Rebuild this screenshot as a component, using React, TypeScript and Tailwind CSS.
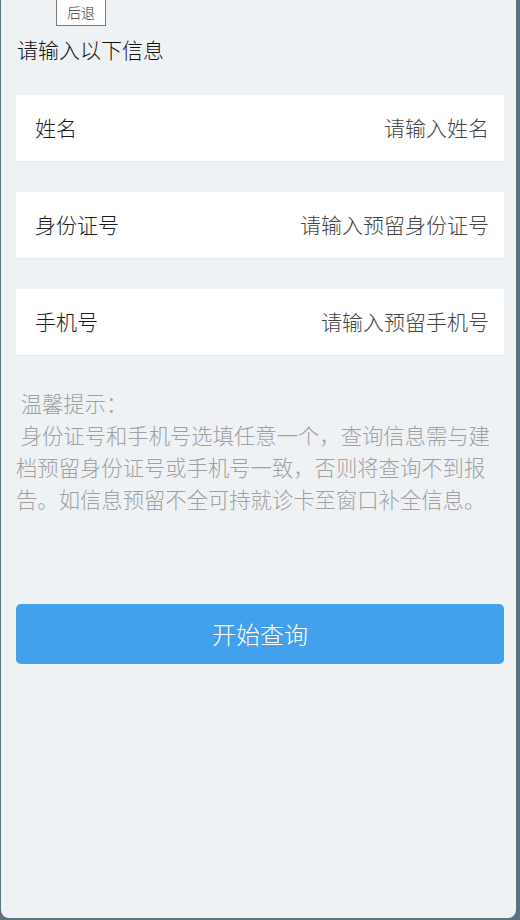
import React from "react";

const font = { fontFamily: '"Microsoft YaHei", "Noto Sans CJK SC", "Noto Sans", sans-serif' };

function Row({ label, placeholder }: { label: string; placeholder: string }) {
  return (
    <div className="flex h-[67px] items-center justify-between bg-white pl-[19px] pr-[15px] border-b border-[#e6e8eb]">
      <span className="text-[21px] font-light text-[#1a1a1a]">{label}</span>
      <span className="text-[21px] font-light text-[#444]">{placeholder}</span>
    </div>
  );
}

export default function App() {
  return (
    <div className="w-[520px] h-[920px] bg-[#5b7280] flex overflow-hidden" style={font}>
      <div className="ml-[1px] w-[515px] h-[918px] rounded-b-[8px] bg-[#eef2f5] pl-[15px] pr-[12px] flex flex-col">
        <div className="flex">
          <button className="ml-[40px] h-[26px] w-[50px] border border-[#777] border-t-0 bg-white text-[14px] font-light text-[#333] flex items-center justify-center">
            后退
          </button>
        </div>
        <div className="mt-[9px] text-[21px] font-light leading-[28px] text-[#111] pl-[1px]">请输入以下信息</div>
        <div className="mt-[32px] flex flex-col gap-[30px]">
          <Row label="姓名" placeholder="请输入姓名" />
          <Row label="身份证号" placeholder="请输入预留身份证号" />
          <Row label="手机号" placeholder="请输入预留手机号" />
        </div>
        <div className="mt-[31px] text-[21.33px] font-light leading-[32px] text-[#a0a0a0]">
          <div>&nbsp;温馨提示：</div>
          <div>&nbsp;身份证号和手机号选填任意一个，查询信息需与建档预留身份证号或手机号一致，否则将查询不到报告。如信息预留不全可持就诊卡至窗口补全信息。</div>
        </div>
        <button className="mt-[89px] h-[60px] w-full rounded-[5px] bg-[#42a0ec] text-white text-[24px] font-light">
          开始查询
        </button>
      </div>
    </div>
  );
}
